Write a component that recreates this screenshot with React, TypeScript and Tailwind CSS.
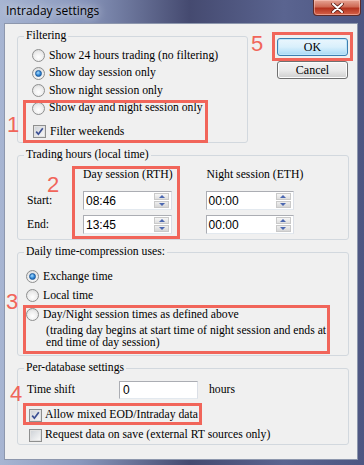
import React from "react";

function Radio({ checked }: { checked?: boolean }) {
  return (
    <span className="flex h-[13px] w-[13px] shrink-0 items-center justify-center rounded-full border border-[#8e8f8f] bg-[radial-gradient(circle_at_50%_65%,#ffffff_0%,#ececec_55%,#cfcfcf_100%)]">
      {checked && (
        <span className="h-[7px] w-[7px] rounded-full border border-[#1c5a9c] bg-[radial-gradient(circle_at_40%_35%,#a6dcff_0%,#2f86d6_55%,#155096_100%)]" />
      )}
    </span>
  );
}

function Check({ checked }: { checked?: boolean }) {
  return (
    <span className="flex h-[13px] w-[13px] shrink-0 items-center justify-center border border-[#8e8f8f] bg-white">
      <span className="flex h-[11px] w-[11px] items-center justify-center border border-[#e2e2e2] bg-gradient-to-br from-[#d0d4d9] to-[#f7f7f7]">
        {checked && (
          <svg width="9" height="9" viewBox="0 0 9 9">
            <path d="M1.2 4.6 L3.4 7.2 L7.8 1.2" fill="none" stroke="#3b4f93" strokeWidth="1.7" />
          </svg>
        )}
      </span>
    </span>
  );
}

function SpinBox({ value, wide }: { value: string; wide?: boolean }) {
  return (
    <div
      className={`flex h-[19px] items-center border border-[#abadb3] border-b-[#e3e9ef] border-r-[#dbdfe6] bg-white pl-[2px] pr-[2px] ${
        wide ? "w-[89px]" : "w-[88px]"
      }`}
    >
      <span className="flex-1 font-['Liberation_Sans',Arial,sans-serif] text-[12px] leading-none">{value}</span>
      <div className="flex h-[15px] w-[15px] flex-col">
        <span className="flex h-[7px] items-center justify-center border border-[#c9c9c9] bg-gradient-to-b from-[#f6f6f6] to-[#dedede]">
          <svg width="6" height="3" viewBox="0 0 6 3">
            <path d="M0 3 L3 0 L6 3 Z" fill="#4b67b0" />
          </svg>
        </span>
        <span className="mt-[1px] flex h-[7px] items-center justify-center border border-[#c9c9c9] bg-gradient-to-b from-[#eeeeee] to-[#d6d6d6]">
          <svg width="6" height="3" viewBox="0 0 6 3">
            <path d="M0 0 L6 0 L3 3 Z" fill="#4b67b0" />
          </svg>
        </span>
      </div>
    </div>
  );
}

function Group({ title, className, children }: { title: string; className: string; children: React.ReactNode }) {
  return (
    <fieldset className={`rounded-[3px] border border-[#d2d8de] ${className}`}>
      <legend className="ml-[6px] px-[2px] text-[11.7px] leading-[14px]">{title}</legend>
      {children}
    </fieldset>
  );
}

function Row({ children, className = "" }: { children: React.ReactNode; className?: string }) {
  return <div className={`flex items-center ${className}`}>{children}</div>;
}

export default function App() {
  return (
    <div className="relative flex h-[465px] w-[364px] flex-col overflow-hidden bg-[linear-gradient(to_right,#a7b5d2_0%,#8a98bd_22%,#454a70_52%,#5a6490_78%,#4d5682_100%)]">
      {/* title bar */}
      <div className="flex h-[23px] shrink-0 items-start justify-between">
        <span className="ml-[6px] mt-[2px] font-['Open_Sans','Noto_Sans',sans-serif] text-[12px] leading-[18px] text-black [text-shadow:0_0_8px_rgba(255,255,255,0.95)]">
          Intraday settings
        </span>
        <div className="mr-[3px] flex h-[16px] w-[48px] items-center justify-center rounded-b-[4px] border border-t-0 border-[#5d2a28] bg-[linear-gradient(to_bottom,#e6a595_0%,#cf6a55_45%,#b4331f_55%,#d6634a_100%)] shadow-[inset_0_0_0_1px_rgba(255,210,200,0.5)]">
          <svg width="13" height="10" viewBox="0 0 13 10">
            <path d="M2 1 L11 9 M11 1 L2 9" stroke="#5a1c14" strokeWidth="3.6" strokeLinecap="round" />
            <path d="M2 1 L11 9 M11 1 L2 9" stroke="#ffffff" strokeWidth="2" strokeLinecap="round" />
          </svg>
        </div>
      </div>

      {/* client area */}
      <div className="mb-[5px] ml-[4px] mr-[6px] flex flex-1 flex-col border border-[#8d97ad] bg-[#f0f0f0] pl-[12px] pt-[5px] font-['Liberation_Serif','Times_New_Roman',serif] text-[11.7px] text-black">
        <div className="flex">
          <Group title="Filtering" className="h-[114px] w-[231px]">
            <div className="flex flex-col pl-[14px] pt-[4px]">
              <Row className="h-[17.5px] gap-[4px]">
                <Radio />
                <span>Show 24 hours trading (no filtering)</span>
              </Row>
              <Row className="h-[17.5px] gap-[4px]">
                <Radio checked />
                <span>Show day session only</span>
              </Row>
              <Row className="h-[17.5px] gap-[4px]">
                <Radio />
                <span>Show night session only</span>
              </Row>
              <Row className="h-[17.5px] gap-[4px]">
                <Radio />
                <span>Show day and night session only</span>
              </Row>
              <Row className="mt-[6px] h-[17px] gap-[4px] pl-[1px]">
                <Check checked />
                <span>Filter weekends</span>
              </Row>
            </div>
          </Group>
          <div className="ml-[29px] mt-[9px] flex flex-col gap-[5px]">
            <button className="h-[18px] w-[71px] rounded-[3px] border border-[#3c7fb1] bg-gradient-to-b from-[#eaf6fd] via-[#d9f0fc] to-[#a7d9f5] text-[12px] leading-none shadow-[inset_0_0_0_1px_#bfe6fa]">
              OK
            </button>
            <button className="h-[18px] w-[71px] rounded-[3px] border border-[#707070] bg-gradient-to-b from-[#f2f2f2] via-[#ebebeb] to-[#cfcfcf] text-[12px] leading-none shadow-[inset_0_0_0_1px_#fcfcfc]">
              Cancel
            </button>
          </div>
        </div>

        <Group title="Trading hours (local time)" className="mt-[5px] h-[92px] w-[332px]">
          <div className="flex pl-[9px] pt-[4px]">
            <div className="flex w-[56px] flex-col pt-[25px]">
              <Row className="h-[19px]">Start:</Row>
              <Row className="mt-[5px] h-[19px]">End:</Row>
            </div>
            <div className="flex flex-col">
              <div className="mt-[2px] h-[14px] leading-[14px]">Day session (RTH)</div>
              <div className="mt-[9px]">
                <SpinBox value="08:46" wide />
              </div>
              <div className="mt-[5px]">
                <SpinBox value="13:45" wide />
              </div>
            </div>
            <div className="ml-[33px] flex flex-col">
              <div className="mt-[2px] h-[14px] pl-[1px] leading-[14px]">Night session (ETH)</div>
              <div className="mt-[9px]">
                <SpinBox value="00:00" />
              </div>
              <div className="mt-[5px]">
                <SpinBox value="00:00" />
              </div>
            </div>
          </div>
        </Group>

        <Group title="Daily time-compression uses:" className="mt-[5px] h-[111px] w-[332px]">
          <div className="flex flex-col pl-[8px] pt-[8px]">
            <Row className="h-[19px] gap-[4px]">
              <Radio checked />
              <span>Exchange time</span>
            </Row>
            <Row className="h-[19px] gap-[4px]">
              <Radio />
              <span>Local time</span>
            </Row>
            <Row className="h-[19px] gap-[4px]">
              <Radio />
              <span>Day/Night session times as defined above</span>
            </Row>
            <div className="mt-[1px] flex flex-col pl-[20px]">
              <span className="h-[12px] leading-[12px]">(trading day begins at start time of night session and ends at</span>
              <span className="h-[12px] leading-[12px]">end time of day session)</span>
            </div>
          </div>
        </Group>

        <Group title="Per-database settings" className="mt-[5px] h-[84px] w-[332px]">
          <div className="flex flex-col pl-[9px] pt-[6px]">
            <Row className="h-[18px]">
              <span className="w-[92px]">Time shift</span>
              <div className="flex h-[18px] w-[79px] items-center border border-[#abadb3] border-b-[#e3e9ef] border-r-[#dbdfe6] bg-white pl-[3px] font-['Liberation_Sans',Arial,sans-serif] text-[12px]">
                0
              </div>
              <span className="ml-[11px]">hours</span>
            </Row>
            <Row className="mt-[6px] h-[20px] gap-[3px] pl-[2px]">
              <Check checked />
              <span>Allow mixed EOD/Intraday data</span>
            </Row>
            <Row className="h-[20px] gap-[3px] pl-[2px]">
              <Check />
              <span>Request data on save (external RT sources only)</span>
            </Row>
          </div>
        </Group>
      </div>

      {/* annotations */}
      <div className="absolute left-[23px] top-[100px] h-[43px] w-[185px] border-[3px] border-[#f1655a]" />
      <div className="absolute left-[72px] top-[166px] h-[73px] w-[108px] border-[3px] border-[#f1655a]" />
      <div className="absolute left-[23px] top-[305px] h-[49px] w-[307px] border-[3px] border-[#f1655a]" />
      <div className="absolute left-[23px] top-[403px] h-[22px] w-[179px] border-[3px] border-[#f1655a]" />
      <div className="absolute left-[272px] top-[32px] h-[29px] w-[81px] border-[3px] border-[#f1655a]" />
      <span className="absolute left-[7px] top-[114px] font-['Liberation_Sans',Arial,sans-serif] text-[22px] leading-none text-[#f1655a]">1</span>
      <span className="absolute left-[47px] top-[174px] font-['Liberation_Sans',Arial,sans-serif] text-[22px] leading-none text-[#f1655a]">2</span>
      <span className="absolute left-[6px] top-[291px] font-['Liberation_Sans',Arial,sans-serif] text-[22px] leading-none text-[#f1655a]">3</span>
      <span className="absolute left-[10px] top-[383px] font-['Liberation_Sans',Arial,sans-serif] text-[22px] leading-none text-[#f1655a]">4</span>
      <span className="absolute left-[251px] top-[33px] font-['Liberation_Sans',Arial,sans-serif] text-[22px] leading-none text-[#f1655a]">5</span>
    </div>
  );
}
